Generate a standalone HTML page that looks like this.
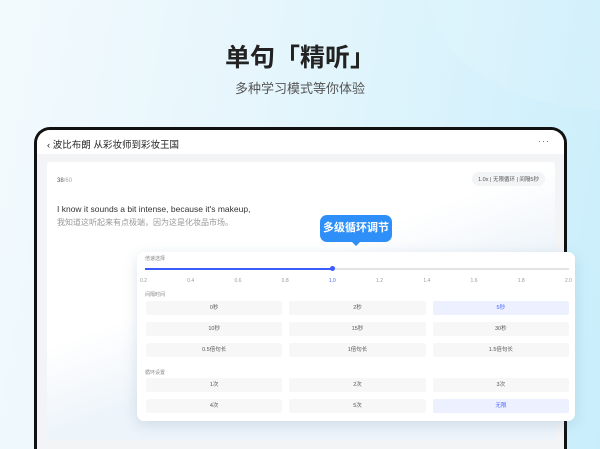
<!DOCTYPE html>
<html><head><meta charset="utf-8"><style>
*{margin:0;padding:0;box-sizing:border-box}
html,body{width:600px;height:449px;overflow:hidden}
body{position:relative;font-family:"Liberation Sans","Noto Sans CJK SC",sans-serif;background:linear-gradient(100deg,#f3fafd 0%,#e2f5fc 50%,#c9eefb 100%)}
.blob{position:absolute;left:430px;top:-120px;width:360px;height:230px;border-radius:50%;background:rgba(255,255,255,.1)}
h1{position:absolute;top:38px;width:100%;text-align:center;font-size:25px;font-weight:bold;color:#222}
.sub{position:absolute;top:78px;width:100%;text-align:center;font-size:13px;color:#555}
.dev{position:absolute;left:34px;top:127px;width:533px;height:322px;border:3px solid #111;border-bottom:0;border-radius:16px 16px 0 0;background:#f3f4f6;overflow:hidden}
.hdr{height:24px;background:#fff;font-size:9.5px;color:#222;padding:7px 0 0 10px;position:relative}
.dots{position:absolute;right:14px;top:6px;font-size:9px;color:#666;letter-spacing:1px}
.card{position:absolute;left:10px;top:32px;width:508px;height:278px;background:linear-gradient(160deg,#fff 0%,#fff 40%,#edf4fa 60%);border-radius:3px}
.cnt{position:absolute;left:10px;top:16px;font-size:6px;color:#555}
.cnt span{color:#aaa}
.tag{position:absolute;right:10px;top:10px;font-size:5.5px;color:#555;background:#f3f4f6;border-radius:8px;padding:3px 6px}
.en{position:absolute;left:10px;top:42px;font-size:8.5px;color:#333}
.zh{position:absolute;left:10px;top:55px;font-size:8px;color:#999}
.bub{position:absolute;left:320px;top:215px;width:72px;height:27px;background:#2f8ff8;border-radius:7px;color:#fff;font-size:11px;font-weight:bold;text-align:center;line-height:27px}
.bub:after{content:"";position:absolute;left:31px;bottom:-4px;border:5px solid transparent;border-top-color:#2f8ff8;border-bottom:0}
.pop{position:absolute;left:137px;top:252px;width:438px;height:169px;background:#fff;border-radius:7px;box-shadow:0 4px 14px rgba(80,120,160,.2)}
.lbl{position:absolute;left:8px;font-size:5px;color:#888}
.track{position:absolute;left:8px;top:16px;width:424px;height:2px;background:#e4e4e4}
.fill{position:absolute;left:0;top:0;width:188px;height:2px;background:#3a5bff}
.knob{position:absolute;left:185px;top:-2px;width:5px;height:5px;border-radius:50%;background:#3a5bff}
.ticks{position:absolute;left:3px;top:26px;width:432px;display:flex;justify-content:space-between;font-size:5px;color:#999}
.grid{position:absolute;left:9px;width:423px;display:grid;grid-template-columns:1fr 1fr 1fr;column-gap:7px;row-gap:7px}
.grid div{height:14px;background:#f7f7f7;border-radius:2px;font-size:5.5px;color:#555;text-align:center;line-height:14px}
.grid .on{background:#edf0ff;color:#4a64ff}
</style></head><body>
<div class="blob"></div>
<h1>单句「精听」</h1>
<div class="sub">多种学习模式等你体验</div>
<div class="dev">
 <div class="hdr">‹ 波比布朗 从彩妆师到彩妆王国<span class="dots">···</span></div>
 <div class="card">
  <div class="cnt">38<span>/60</span></div>
  <div class="tag">1.0x | 无限循环 | 间隔5秒</div>
  <div class="en">I know it sounds a bit intense, because it's makeup,</div>
  <div class="zh">我知道这听起来有点极端，因为这是化妆品市场。</div>
 </div>
</div>
<div class="bub">多级循环调节</div>
<div class="pop">
 <div class="lbl" style="top:3px">倍速选择</div>
 <div class="track"><div class="fill"></div><div class="knob"></div></div>
 <div class="ticks"><span>0.2</span><span>0.4</span><span>0.6</span><span>0.8</span><span style="color:#4a64ff">1.0</span><span>1.2</span><span>1.4</span><span>1.6</span><span>1.8</span><span>2.0</span></div>
 <div class="lbl" style="top:39px">间隔时间</div>
 <div class="grid" style="top:49px"><div>0秒</div><div>2秒</div><div class="on">5秒</div><div>10秒</div><div>15秒</div><div>30秒</div><div>0.5倍句长</div><div>1倍句长</div><div>1.5倍句长</div></div>
 <div class="lbl" style="top:117px">循环设置</div>
 <div class="grid" style="top:126px"><div>1次</div><div>2次</div><div>3次</div><div>4次</div><div>5次</div><div class="on">无限</div></div>
</div>
</body></html>
